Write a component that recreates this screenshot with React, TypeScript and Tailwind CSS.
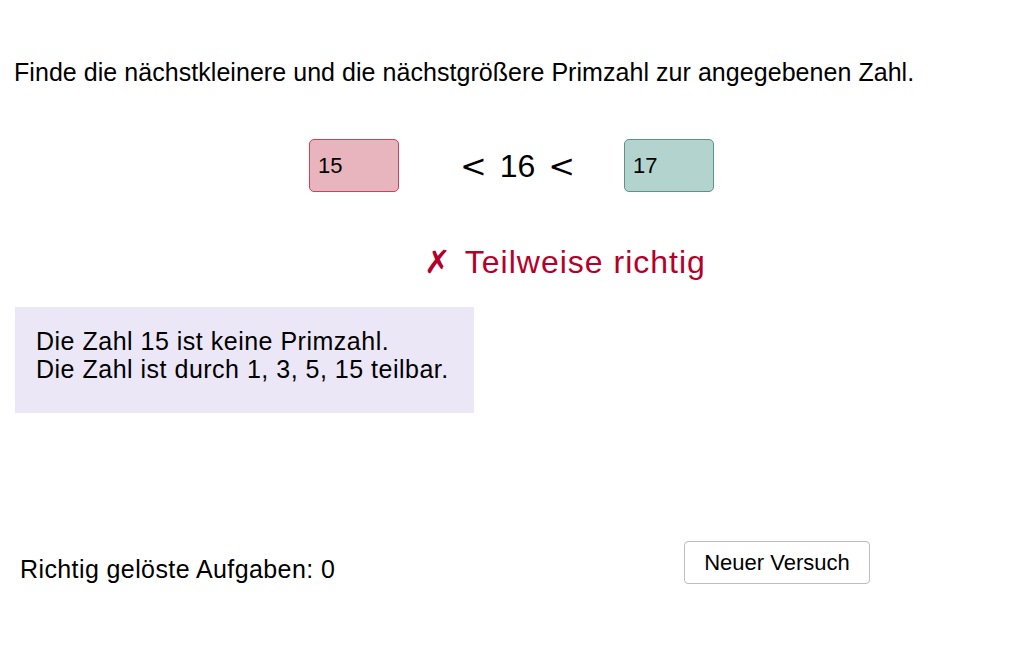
import React from "react";

export default function App() {
  return (
    <div className="w-[1032px] h-[645px] bg-white text-black overflow-hidden" style={{ fontFamily: '"Liberation Sans", Arial, sans-serif' }}>
      <div className="pt-[57px] pl-[14px] text-[25px] leading-[30px] tracking-[0.05px]">
        Finde die nächstkleinere und die nächstgrößere Primzahl zur angegebenen Zahl.
      </div>
      <div className="mt-[52px] flex items-center pl-[309px]">
        <div className="w-[90px] h-[53px] rounded-[5px] border border-[#cf3f62] bg-[#e8b4bd] flex items-center pl-[8px] text-[22px]">
          15
        </div>
        <div className="w-[225px] flex justify-center items-center text-[32px] pl-[12px]">
          <span style={{ fontFamily: '"DejaVu Serif", serif' }}>&lt;</span>
          <span className="mx-[13px]">16</span>
          <span style={{ fontFamily: '"DejaVu Serif", serif' }}>&lt;</span>
        </div>
        <div className="w-[90px] h-[53px] rounded-[5px] border border-[#5e918a] bg-[#b3d3cf] flex items-center pl-[8px] text-[22px]">
          17
        </div>
      </div>
      <div className="mt-[50px] pl-[424px] text-[32px] leading-[40px] text-[#b5002b] flex items-center">
        <span className="font-bold mr-[14px]" style={{ fontFamily: '"DejaVu Sans", sans-serif' }}>✗</span>
        <span className="tracking-[1px]">Teilweise richtig</span>
      </div>
      <div className="mt-[25px] ml-[15px] w-[459px] h-[106px] bg-[#ebe7f7] pt-[20px] pl-[21px] text-[25px] leading-[28px] tracking-[0.5px]">
        <div>Die Zahl 15 ist keine Primzahl.</div>
        <div>Die Zahl ist durch 1, 3, 5, 15 teilbar.</div>
      </div>
      <div className="mt-[128px] flex items-start">
        <div className="pl-[20px] w-[684px] text-[25px] leading-[30px] pt-[13px] tracking-[0.4px]">Richtig gelöste Aufgaben: 0</div>
        <button className="w-[186px] h-[43px] rounded-[4px] border border-[#bdbdbd] bg-white text-[22px]">
          Neuer Versuch
        </button>
      </div>
    </div>
  );
}
